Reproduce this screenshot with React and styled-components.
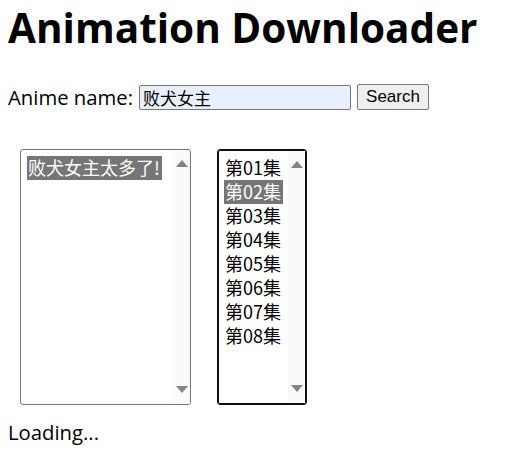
import styled, { createGlobalStyle } from "styled-components";

const GlobalStyle = createGlobalStyle`
  body {
    margin: 0;
    background: #fff;
    color: #000;
    font-family: "Open Sans", "Noto Sans CJK SC", sans-serif;
  }
`;

const Page = styled.div`
  padding: 0 8px;
`;

const Title = styled.h1`
  margin: 0;
  padding-top: 2px;
  font-size: 40.5px;
  line-height: 52px;
  font-weight: 700;
`;

const SearchRow = styled.div`
  display: flex;
  align-items: center;
  margin-top: 29px;
  font-size: 20.3px;
`;

const Label = styled.label`
  margin-right: 6px;
`;

const NameInput = styled.input`
  box-sizing: border-box;
  width: 212px;
  height: 25px;
  padding: 0 3px;
  border: 1px solid #767676;
  border-radius: 2px;
  background: #e8f0fe;
  font-family: "Noto Sans CJK SC", sans-serif;
  font-size: 17px;
  color: #000;
  outline: none;
`;

const Button = styled.button`
  box-sizing: border-box;
  margin-left: 6px;
  width: 72px;
  height: 26px;
  padding: 0;
  border: 1px solid #767676;
  border-radius: 2px;
  background: #efefef;
  font-family: "Liberation Sans", sans-serif;
  font-size: 17px;
  color: #000;
`;

const Lists = styled.div`
  display: flex;
  gap: 26px;
  margin: 38px 0 0 12px;
`;

const ListBox = styled.div`
  box-sizing: border-box;
  display: flex;
  width: ${(p) => p.$width}px;
  height: 256px;
  border: 1px solid ${(p) => (p.$focused ? "#101010" : "#767676")};
  box-shadow: ${(p) => (p.$focused ? "inset 0 0 0 1px #101010" : "none")};
  border-radius: 3px;
  overflow: hidden;
`;

const Options = styled.div`
  flex: 1;
  padding: 6px 0 0 6px;
  font-family: "Noto Sans CJK SC", sans-serif;
  font-size: 18px;
`;

const Option = styled.div`
  width: fit-content;
  height: 24px;
  line-height: 23px;
  padding: 0 2px 0 1px;
  background: ${(p) => (p.$selected ? "#767676" : "transparent")};
  color: ${(p) => (p.$selected ? "#fff" : "#000")};
  white-space: nowrap;
`;

const Scrollbar = styled.div`
  display: flex;
  flex-direction: column;
  justify-content: space-between;
  align-items: center;
  width: 17px;
  margin: ${(p) => (p.$focused ? "1px 1px 1px 0" : "0")};
  padding: 10px 0 11px;
  box-sizing: border-box;
  background: #fafafa;
`;

const Arrow = styled.span`
  width: 0;
  height: 0;
  border-left: 6px solid transparent;
  border-right: 6px solid transparent;
  ${(p) =>
    p.$down ? "border-top: 7px solid #858585;" : "border-bottom: 7px solid #858585;"}
`;

const Status = styled.div`
  margin-top: 14px;
  font-size: 20.3px;
  line-height: 26px;
`;

const episodes = ["第01集", "第02集", "第03集", "第04集", "第05集", "第06集", "第07集", "第08集"];

function List({ width, focused, items, selected }) {
  return (
    <ListBox $width={width} $focused={focused}>
      <Options>
        {items.map((it) => (
          <Option key={it} $selected={it === selected}>
            {it}
          </Option>
        ))}
      </Options>
      <Scrollbar $focused={focused}>
        <Arrow />
        <Arrow $down />
      </Scrollbar>
    </ListBox>
  );
}

export default function App() {
  return (
    <Page>
      <GlobalStyle />
      <Title>Animation Downloader</Title>
      <SearchRow>
        <Label>Anime name:</Label>
        <NameInput defaultValue="败犬女主" />
        <Button>Search</Button>
      </SearchRow>
      <Lists>
        <List width={171} items={["败犬女主太多了!"]} selected="败犬女主太多了!" />
        <List width={90} focused items={episodes} selected="第02集" />
      </Lists>
      <Status>Loading...</Status>
    </Page>
  );
}
